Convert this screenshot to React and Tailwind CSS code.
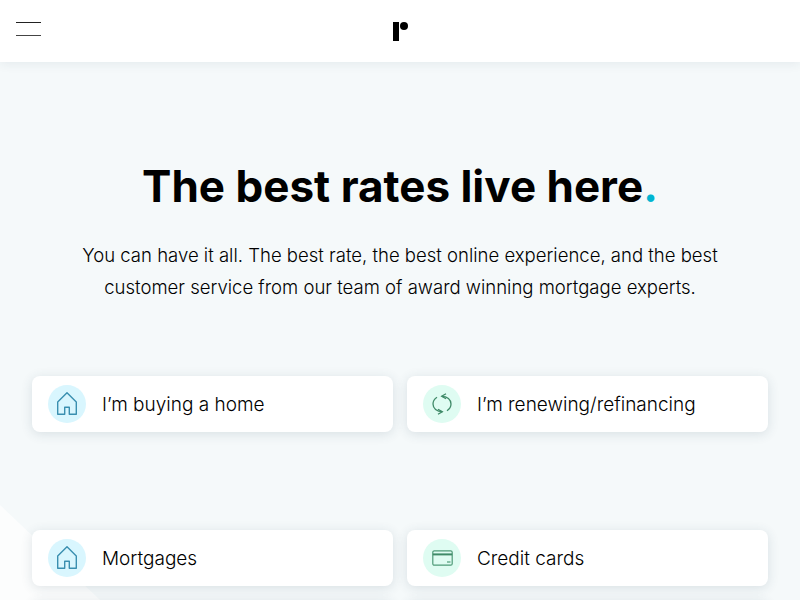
// Mortgage landing hero with rate category cards.

function HomeIcon() {
  return (
    <svg width="20" height="24" viewBox="0 0 20 24" fill="none" stroke="#3a8fb0" strokeWidth="1.4">
      <path d="M.7 10 10 .7l9.3 9.3v12.3h-7v-7H7.7v7h-7z" strokeLinejoin="round" />
    </svg>
  );
}

function RefreshIcon() {
  return (
    <svg width="24" height="24" viewBox="0 0 24 24" fill="none" stroke="#3f8a68" strokeWidth="1.3">
      <path d="M7 5.3C4.4 7 3 9.3 3 12c0 4.2 3.7 7.7 9.3 7.7" />
      <path d="M8 17.3l4.3 2.4L8 22.3" />
      <path d="M17 18.7c2.6-1.7 4-4 4-6.7 0-4.2-3.7-7.7-9.3-7.7" />
      <path d="M16 6.7l-4.3-2.4L16 1.7" />
    </svg>
  );
}

function CardIcon() {
  return (
    <svg width="21" height="16" viewBox="0 0 21 16" fill="none" stroke="#4f9a78" strokeWidth="1.2">
      <rect x="0.8" y="0.8" width="19.4" height="14.4" rx="1.5" />
      <path d="M0.8 4.4h19.4" strokeWidth="2" stroke="#3f8a68" />
      <path d="M15 12h3.5" />
    </svg>
  );
}

function OptionCard({ label, tint, children }) {
  return (
    <a className="flex h-14 items-center rounded-lg bg-white pl-4 shadow-[0_2px_12px_rgba(40,70,90,0.14)]">
      <span className={`flex h-[38px] w-[38px] items-center justify-center rounded-full ${tint}`}>
        {children}
      </span>
      <span className="ml-4 pt-0.5 text-[19px] font-light text-black">{label}</span>
    </a>
  );
}

export default function App() {
  return (
    <div className="relative h-[600px] overflow-hidden bg-[#f5f9fa] font-['Inter',sans-serif]">
      {/* pale diagonal in the page background */}
      <div className="absolute bottom-0 left-0 h-[95px] w-[100px] bg-[#fcfdfd] [clip-path:polygon(0_0,100%_100%,0_100%)]" />

      <header className="relative flex h-[62px] items-center justify-center bg-white shadow-[0_2px_10px_rgba(40,70,90,0.08)]">
        <div className="absolute left-4 top-[22px] flex h-[14px] w-[25px] flex-col justify-between">
          <span className="h-px bg-[#222]" />
          <span className="h-px bg-[#444]" />
        </div>
        <div className="flex items-start gap-px">
          <span className="h-[19px] w-[6px] bg-black" />
          <span className="h-2 w-2 rounded-full bg-black" />
        </div>
      </header>

      <main className="relative px-8">
        <h1 className="mt-[94px] text-center text-[44px] font-bold leading-[60px] text-black">
          The best rates live here<span className="text-[#00b5d1]">.</span>
        </h1>
        <p className="mx-auto mt-[23px] w-[680px] text-center text-[18.55px] font-light leading-8 text-black">
          You can have it all. The best rate, the best online experience, and the best customer
          service from our team of award winning mortgage experts.
        </p>

        <div className="mt-[73px] grid grid-cols-2 gap-x-[14px]">
          <OptionCard label="I’m buying a home" tint="bg-[#d9f6fe]">
            <HomeIcon />
          </OptionCard>
          <OptionCard label="I’m renewing/refinancing" tint="bg-[#dffcf2]">
            <RefreshIcon />
          </OptionCard>
        </div>

        <div className="mt-[98px] grid grid-cols-2 gap-x-[14px] gap-y-[14px]">
          <OptionCard label="Mortgages" tint="bg-[#d9f6fe]">
            <HomeIcon />
          </OptionCard>
          <OptionCard label="Credit cards" tint="bg-[#dffcf2]">
            <CardIcon />
          </OptionCard>
          {/* next row starts just past the fold, only its shadow shows */}
          <div className="h-14 rounded-lg bg-white shadow-[0_2px_12px_rgba(40,70,90,0.14)]" />
          <div className="h-14 rounded-lg bg-white shadow-[0_2px_12px_rgba(40,70,90,0.14)]" />
        </div>
      </main>
    </div>
  );
}
